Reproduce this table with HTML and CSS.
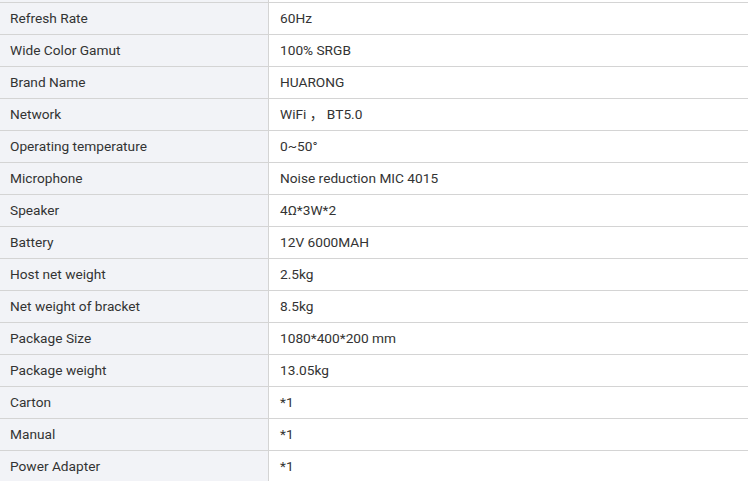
FILE: index.html
```html
<!DOCTYPE html>
<html>
<head>
<meta charset="utf-8">
<link rel="stylesheet" href="styles.css">
</head>
<body>
<div class="spec">
  <div class="row"><div class="k"></div><div class="v"></div></div>
  <div class="row"><div class="k">Refresh Rate</div><div class="v">60Hz</div></div>
  <div class="row"><div class="k">Wide Color Gamut</div><div class="v">100% SRGB</div></div>
  <div class="row"><div class="k">Brand Name</div><div class="v">HUARONG</div></div>
  <div class="row"><div class="k">Network</div><div class="v">WiFi <span class="cjk">，</span> BT5.0</div></div>
  <div class="row"><div class="k">Operating temperature</div><div class="v">0~50°</div></div>
  <div class="row"><div class="k">Microphone</div><div class="v">Noise reduction MIC 4015</div></div>
  <div class="row"><div class="k">Speaker</div><div class="v">4Ω*3W*2</div></div>
  <div class="row"><div class="k">Battery</div><div class="v">12V 6000MAH</div></div>
  <div class="row"><div class="k">Host net weight</div><div class="v">2.5kg</div></div>
  <div class="row"><div class="k">Net weight of bracket</div><div class="v">8.5kg</div></div>
  <div class="row"><div class="k">Package Size</div><div class="v">1080*400*200 mm</div></div>
  <div class="row"><div class="k">Package weight</div><div class="v">13.05kg</div></div>
  <div class="row"><div class="k">Carton</div><div class="v">*1</div></div>
  <div class="row"><div class="k">Manual</div><div class="v">*1</div></div>
  <div class="row"><div class="k">Power Adapter</div><div class="v">*1</div></div>
</div>
</body>
</html>
```
FILE: styles.css
```css
html, body {
  margin: 0;
  padding: 0;
  background: #fff;
  overflow: hidden;
}
.spec {
  margin-top: -29px;
  font-family: Roboto, "Noto Sans CJK SC", sans-serif;
  font-size: 13.7px;
  color: #333;
}
.row {
  display: grid;
  grid-template-columns: 269px 1fr;
  height: 32px;
  border-bottom: 1px solid #d4d4d4;
  box-sizing: border-box;
}
.k {
  background: #f2f3f7;
  border-right: 1px solid #d4d4d4;
  padding-left: 10px;
  padding-bottom: 2px;
  display: flex;
  align-items: center;
}
.v {
  padding-left: 11px;
  padding-bottom: 2px;
  display: flex;
  align-items: center;
  white-space: pre;
}
.cjk {
  font-family: "Noto Sans CJK SC", sans-serif;
  line-height: 1;
}
```
